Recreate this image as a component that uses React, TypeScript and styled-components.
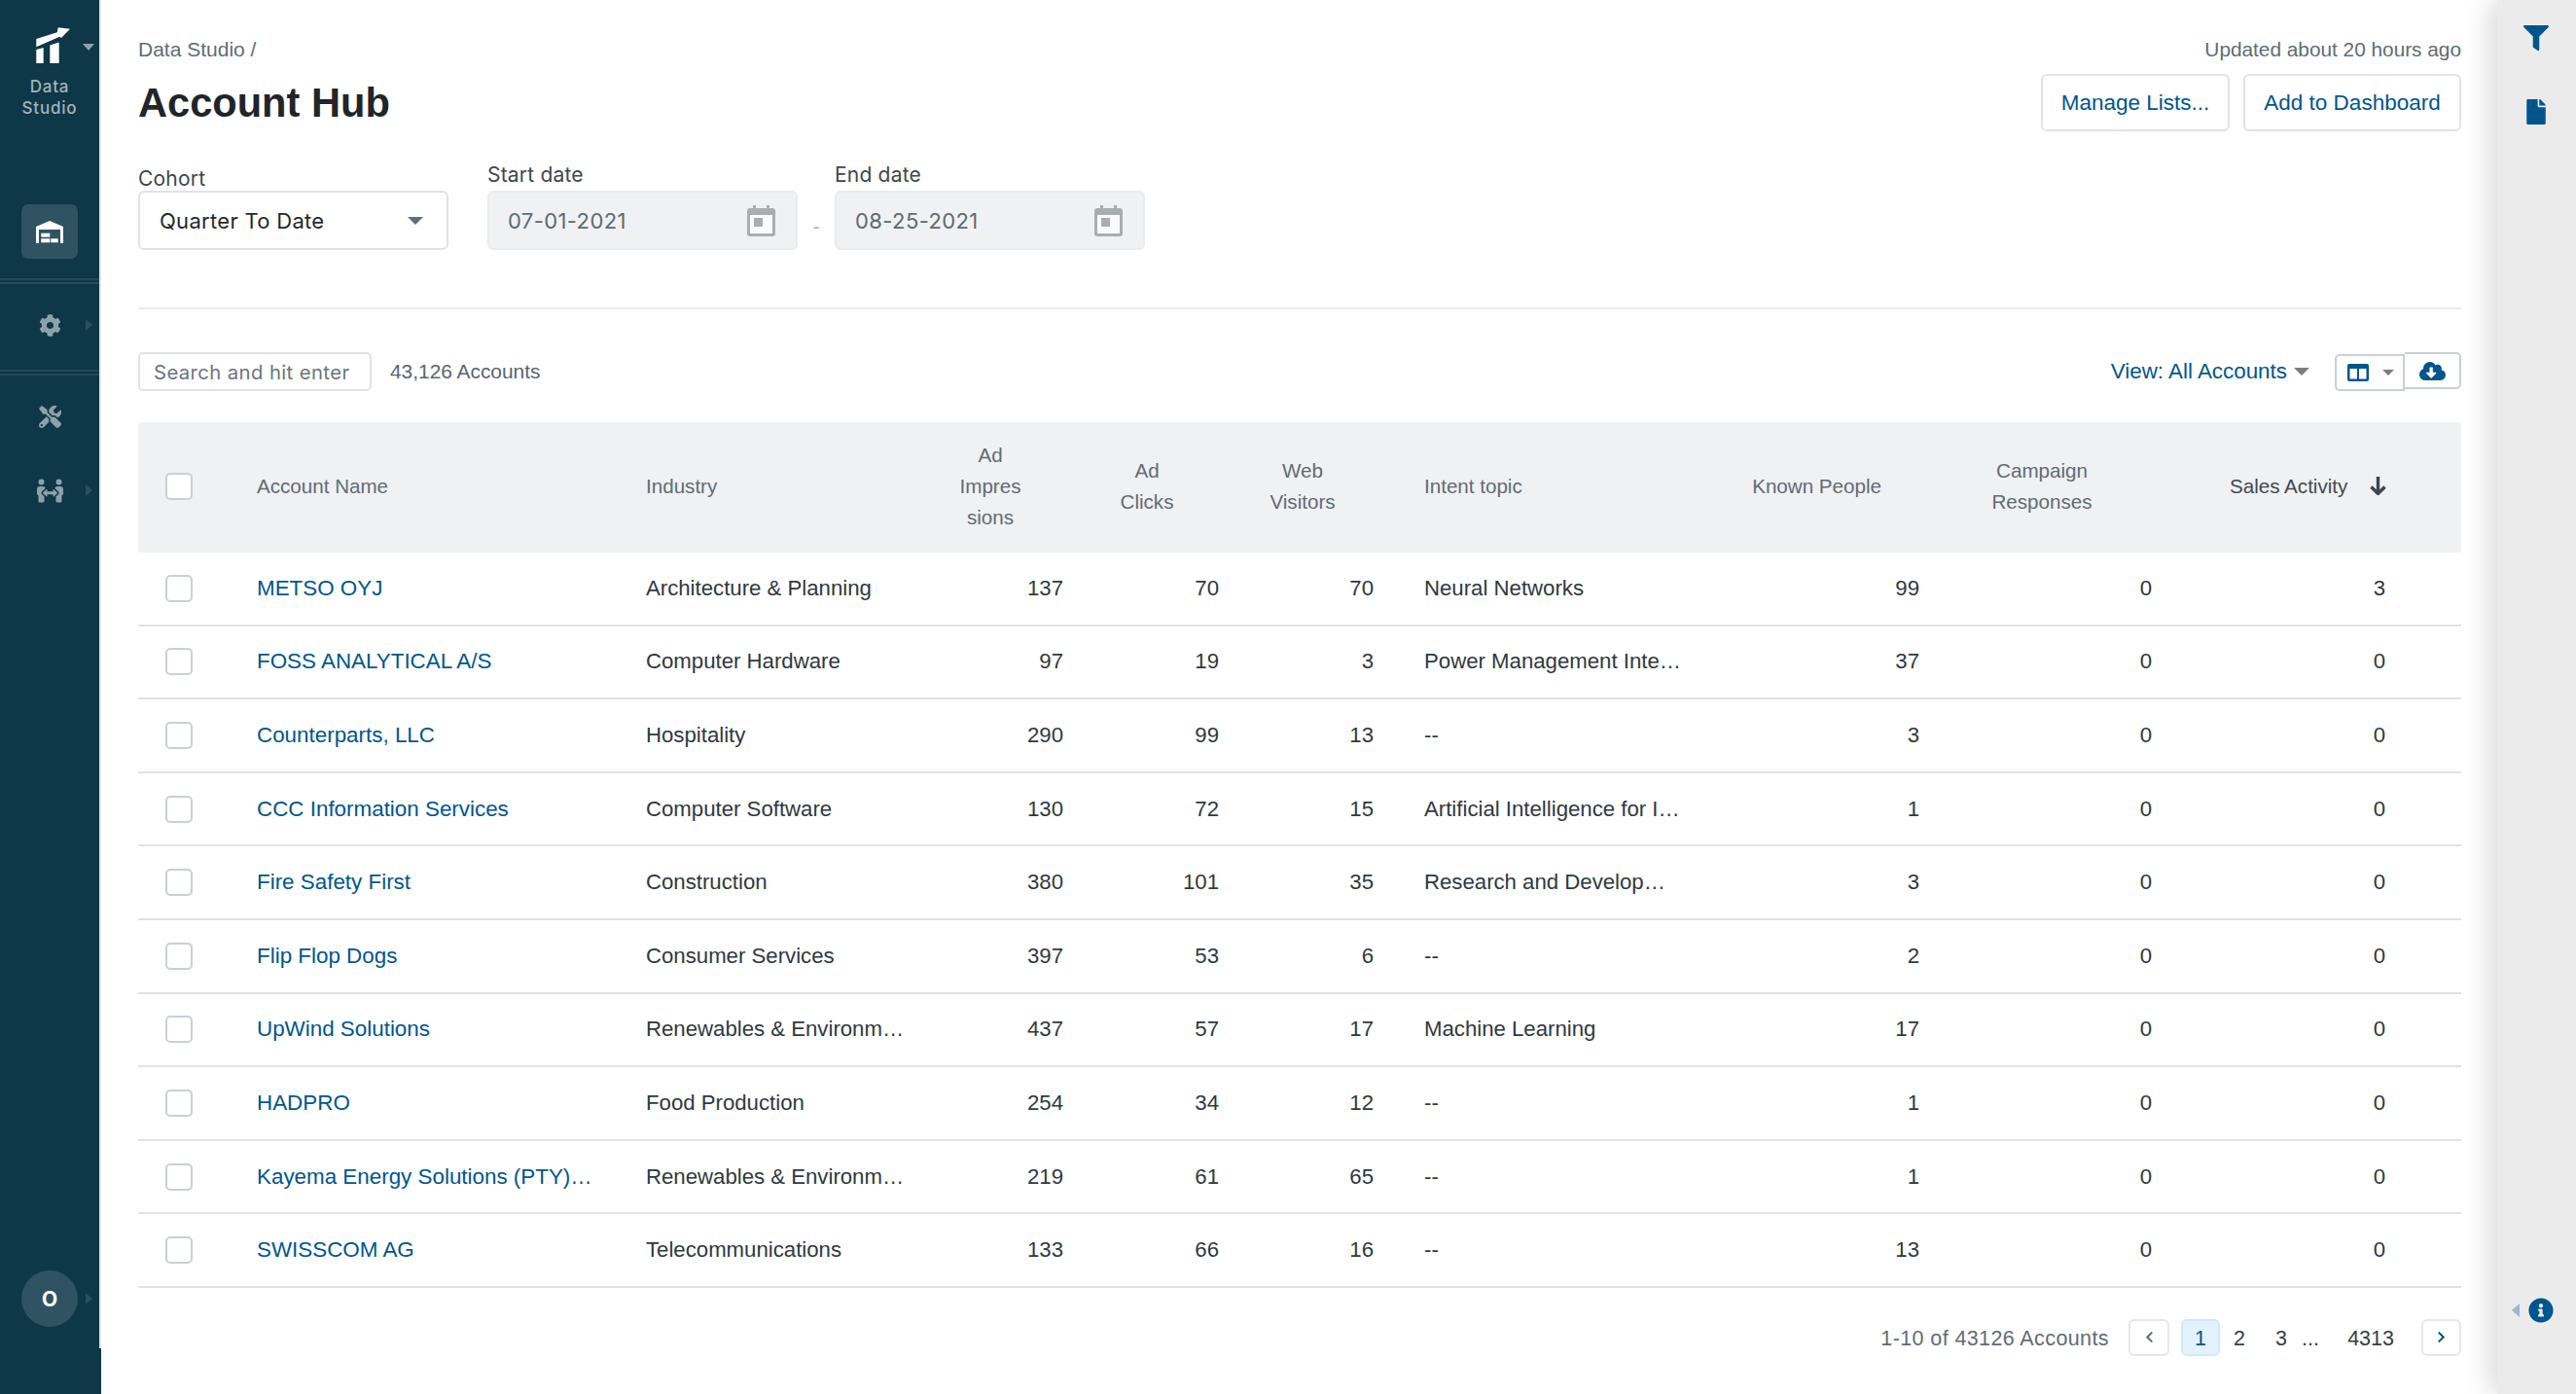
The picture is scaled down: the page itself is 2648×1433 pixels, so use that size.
import React from "react";
import styled, { createGlobalStyle } from "styled-components";
import {
  FaCog,
  FaTools,
  FaPeopleArrows,
  FaFilter,
  FaFile,
  FaCloudDownloadAlt,
  FaInfoCircle,
  FaChevronLeft,
  FaChevronRight,
} from "react-icons/fa";

const NAVY = "#0e3747";
const LINK = "#00568c";
const LINE = "#dfe3e7";
const SANS = '"Liberation Sans", Arial, sans-serif';
const UI = 'Inter, "Noto Sans", sans-serif';

const rows = [
  ["METSO OYJ", "Architecture & Planning", 137, 70, 70, "Neural Networks", 99, 0, 3],
  ["FOSS ANALYTICAL A/S", "Computer Hardware", 97, 19, 3, "Power Management Inte…", 37, 0, 0],
  ["Counterparts, LLC", "Hospitality", 290, 99, 13, "--", 3, 0, 0],
  ["CCC Information Services", "Computer Software", 130, 72, 15, "Artificial Intelligence for I…", 1, 0, 0],
  ["Fire Safety First", "Construction", 380, 101, 35, "Research and Develop…", 3, 0, 0],
  ["Flip Flop Dogs", "Consumer Services", 397, 53, 6, "--", 2, 0, 0],
  ["UpWind Solutions", "Renewables & Environm…", 437, 57, 17, "Machine Learning", 17, 0, 0],
  ["HADPRO", "Food Production", 254, 34, 12, "--", 1, 0, 0],
  ["Kayema Energy Solutions (PTY)…", "Renewables & Environm…", 219, 61, 65, "--", 1, 0, 0],
  ["SWISSCOM AG", "Telecommunications", 133, 66, 16, "--", 13, 0, 0],
];

const GlobalStyle = createGlobalStyle`
  html, body {
    margin: 0;
    height: 100%;
    background: #fff;
    font-family: ${SANS};
    overflow: hidden;
  }
  * {
    box-sizing: border-box;
  }
`;

const Page = styled.div`
  display: flex;
  height: 1433px;
`;

const Sidebar = styled.aside`
  width: 104px;
  flex: none;
  display: flex;
  flex-direction: column;
  background: ${NAVY};
`;

const SidebarBody = styled.div`
  flex: 1;
  display: flex;
  flex-direction: column;
  border-right: 2px solid #e4e4e2;
  padding: 28px 0 22px;
`;

const SidebarFoot = styled.div`
  height: 47px;
`;

const LogoBlock = styled.div`
  position: relative;
  height: 182px;
  display: flex;
  flex-direction: column;
  align-items: center;
`;

const LogoMark = styled.svg`
  width: 38px;
  height: 38px;
  margin-left: 8px;
`;

const LogoText = styled.div`
  margin-top: 12px;
  font-family: ${UI};
  font-size: 17px;
  font-weight: 500;
  line-height: 22px;
  letter-spacing: 0.8px;
  text-align: center;
  color: #a3b3bb;
`;

const DownCaret = styled.span<{ $w: number; $h: number; $color: string }>`
  display: inline-block;
  flex: none;
  width: 0;
  height: 0;
  border-left: ${(p) => p.$w / 2}px solid transparent;
  border-right: ${(p) => p.$w / 2}px solid transparent;
  border-top: ${(p) => p.$h}px solid ${(p) => p.$color};
`;

const LogoCaret = styled.span`
  position: absolute;
  left: 85px;
  top: 17px;
  line-height: 0;
`;

const NavSlot = styled.div<{ $active?: boolean; $gap?: number }>`
  position: relative;
  width: 58px;
  height: 56px;
  margin: ${(p) => p.$gap ?? 0}px 0 0 22px;
  flex: none;
  display: flex;
  align-items: center;
  justify-content: center;
  border-radius: 7px;
  background: ${(p) => (p.$active ? "#2f5361" : "transparent")};
  color: #8ea1ab;
`;

const NavCaret = styled.span`
  position: absolute;
  left: 66px;
  top: 50%;
  margin-top: -6px;
  width: 0;
  height: 0;
  border-top: 6px solid transparent;
  border-bottom: 6px solid transparent;
  border-left: 7px solid #2c4f5e;
`;

const NavRule = styled.div<{ $gap: number }>`
  flex: none;
  height: 6px;
  margin: ${(p) => p.$gap}px 0 14px;
  border-top: 2px solid #264a59;
  border-bottom: 2px solid #264a59;
`;

const Avatar = styled.div`
  position: relative;
  margin: auto 0 0 22px;
  width: 58px;
  height: 58px;
  display: flex;
  align-items: center;
  justify-content: center;
  border-radius: 50%;
  background: #2f5361;
  color: #fff;
  font-family: ${UI};
  font-size: 21px;
  font-weight: 700;
`;

const Main = styled.main`
  flex: 1;
  min-width: 0;
  padding: 38px 37px 0 38px;
`;

const Header = styled.header`
  display: flex;
  justify-content: space-between;
`;

const HeaderLeft = styled.div`
  display: flex;
  flex-direction: column;
`;

const Crumb = styled.div`
  font-size: 21px;
  line-height: 26px;
  color: #5f6c74;
`;

const Title = styled.h1`
  margin: 18px 0 0;
  font-size: 41.6px;
  line-height: 48px;
  font-weight: 700;
  color: #1f2529;
`;

const HeaderRight = styled.div`
  display: flex;
  flex-direction: column;
  align-items: flex-end;
`;

const Updated = styled.div`
  font-size: 20.8px;
  line-height: 26px;
  color: #5f6c74;
`;

const HeaderButtons = styled.div`
  display: flex;
  gap: 14px;
  margin-top: 12px;
`;

const OutlineButton = styled.button<{ $w: number }>`
  width: ${(p) => p.$w}px;
  height: 59px;
  padding: 1px 0 0;
  background: #fff;
  border: 2px solid ${LINE};
  border-radius: 6px;
  font-family: ${SANS};
  font-size: 22.5px;
  color: ${LINK};
`;

const Filters = styled.div`
  display: flex;
  align-items: flex-end;
  margin-top: 33px;
`;

const Field = styled.div<{ $mr?: number }>`
  display: flex;
  flex-direction: column;
  margin-right: ${(p) => p.$mr ?? 0}px;
`;

const FieldLabel = styled.label<{ $low?: boolean }>`
  font-family: ${UI};
  font-size: 21px;
  line-height: 24px;
  letter-spacing: 0.2px;
  color: #3d474e;
  margin-bottom: ${(p) => (p.$low ? 0 : 4)}px;
`;

const SelectBox = styled.div`
  width: 319px;
  height: 61px;
  display: flex;
  align-items: center;
  justify-content: space-between;
  padding: 1px 24px 0 20px;
  background: #fff;
  border: 2px solid ${LINE};
  border-radius: 6px;
  font-family: ${UI};
  font-size: 22px;
  letter-spacing: 0.3px;
  color: #23292d;
`;

const DateBox = styled.div`
  width: 319px;
  height: 61px;
  display: flex;
  align-items: center;
  justify-content: space-between;
  padding: 1px 21px 0 19px;
  background: #f0f1f3;
  border: 2px solid #e9ebee;
  border-radius: 6px;
  font-family: ${UI};
  font-size: 22px;
  letter-spacing: 0.4px;
  color: #5d6a72;
`;

const DateDash = styled.span`
  width: 38px;
  height: 61px;
  display: flex;
  align-items: flex-end;
  justify-content: center;
  padding-bottom: 12px;
  font-size: 20px;
  color: #a5adb3;
`;

const Rule = styled.hr`
  margin: 59px 0 0;
  height: 2px;
  border: 0;
  background: #e8ebee;
`;

const Toolbar = styled.div`
  display: flex;
  align-items: center;
  height: 40px;
  margin-top: 44px;
`;

const SearchInput = styled.div`
  width: 240px;
  height: 40px;
  display: flex;
  align-items: center;
  padding-left: 14px;
  border: 2px solid ${LINE};
  border-radius: 5px;
  font-family: ${UI};
  font-size: 20.3px;
  letter-spacing: 0.4px;
  color: #6a757d;
`;

const Count = styled.span`
  margin-left: 19px;
  font-size: 20.9px;
  color: #59656d;
`;

const ViewPicker = styled.div`
  margin-left: auto;
  display: flex;
  align-items: center;
  gap: 7px;
  font-size: 22.4px;
  color: ${LINK};
`;

const ColumnsButton = styled.button`
  margin-left: 26px;
  align-self: flex-end;
  width: 72px;
  height: 38px;
  display: flex;
  align-items: center;
  gap: 14px;
  padding: 0 0 0 11px;
  background: #fff;
  border: 2px solid #c9d0d6;
  border-radius: 5px 0 0 5px;
`;

const DownloadButton = styled.button`
  align-self: flex-start;
  width: 58px;
  height: 38px;
  display: flex;
  align-items: center;
  justify-content: center;
  padding: 0;
  background: #fff;
  border: 2px solid #c9d0d6;
  border-left: 0;
  border-radius: 0 5px 5px 0;
  color: ${LINK};
  font-size: 27px;
`;

const GRID = "122px 400px 284px 163px 160px 159px 352px 209px 239px 300px";

const HeadRow = styled.div`
  display: grid;
  grid-template-columns: ${GRID};
  height: 134px;
  margin-top: 32px;
  padding-bottom: 3px;
  background: #f0f1f3;
  border-radius: 4px 4px 0 0;
  font-size: 20.6px;
  line-height: 32px;
  color: #5f6c74;
`;

const BodyRow = styled.div`
  display: grid;
  grid-template-columns: ${GRID};
  height: 75.6px;
  border-bottom: 2px solid ${LINE};
  font-size: 22.2px;
  color: #2f3940;
`;

const Cell = styled.div<{ $align?: string; $pl?: number; $pr?: number; $dark?: boolean }>`
  display: flex;
  align-items: center;
  justify-content: ${(p) => (p.$align === "right" ? "flex-end" : p.$align === "center" ? "center" : "flex-start")};
  text-align: ${(p) => p.$align ?? "left"};
  padding-left: ${(p) => p.$pl ?? 0}px;
  padding-right: ${(p) => p.$pr ?? 0}px;
  white-space: nowrap;
  color: ${(p) => (p.$dark ? "#3f4a52" : "inherit")};
`;

const NameLink = styled.a`
  color: ${LINK};
  text-decoration: none;
  font-size: 22.4px;
`;

const Check = styled.span`
  display: block;
  width: 28px;
  height: 28px;
  background: #fff;
  border: 2px solid #c9d0d6;
  border-radius: 5px;
`;

const SortArrow = styled.svg`
  margin-left: 23px;
  width: 17px;
  height: 19px;
`;

const Pager = styled.nav`
  display: flex;
  align-items: center;
  justify-content: flex-end;
  height: 38px;
  margin-top: 32px;
  font-size: 21.5px;
  color: #353f46;
`;

const PagerSummary = styled.span`
  margin-right: 20px;
  padding-top: 3px;
  color: #5f6c74;
  letter-spacing: 0.4px;
`;

const PagerArrow = styled.button<{ $side: "prev" | "next" }>`
  width: ${(p) => (p.$side === "prev" ? 42 : 41)}px;
  height: 38px;
  margin: ${(p) => (p.$side === "prev" ? "0 12px 0 0" : "0 0 0 28px")};
  display: flex;
  align-items: center;
  justify-content: center;
  padding: 0;
  background: #fff;
  border: 2px solid #e5e8eb;
  border-radius: 6px;
  font-size: 13px;
  color: ${(p) => (p.$side === "prev" ? "#5f6c74" : LINK)};
`;

const PageNum = styled.span<{ $w?: number; $current?: boolean; $right?: boolean }>`
  width: ${(p) => p.$w ?? 40}px;
  height: 38px;
  padding-top: 3px;
  display: flex;
  align-items: center;
  justify-content: ${(p) => (p.$right ? "flex-end" : "center")};
  border-radius: 6px;
  background: ${(p) => (p.$current ? "#e3f2fd" : "transparent")};
  border: ${(p) => (p.$current ? "2px solid #cfe8fb" : "0")};
  color: ${(p) => (p.$current ? "#00568c" : "inherit")};
`;

const RightPanel = styled.aside`
  width: 81px;
  flex: none;
  display: flex;
  flex-direction: column;
  align-items: center;
  padding: 26px 1px 73px 0;
  background: #ebebeb;
  box-shadow: -6px 0 28px rgba(0, 0, 0, 0.16);
  color: ${LINK};
  z-index: 1;
`;

const PanelFilter = styled(FaFilter)`
  width: 26px;
  height: 26px;
`;

const PanelFile = styled(FaFile)`
  width: 20px;
  height: 26px;
  margin-top: 50px;
`;

const InfoRow = styled.div`
  margin-top: auto;
  display: flex;
  align-items: center;
  gap: 9px;
  margin-right: 8px;
  font-size: 26px;
  line-height: 0;
`;

const LeftCaret = styled.span`
  width: 0;
  height: 0;
  border-top: 7px solid transparent;
  border-bottom: 7px solid transparent;
  border-right: 8px solid #9db8cc;
`;

const CalendarIcon = () => (
  <svg width="29" height="32" viewBox="0 0 29 32">
    <rect x="6" y="0" width="3" height="6" fill="#a9adb0" />
    <rect x="20" y="0" width="3" height="6" fill="#a9adb0" />
    <rect x="0" y="3" width="29" height="29" rx="3" fill="#a9adb0" />
    <rect x="3" y="10" width="23" height="19" fill="#fbfbfb" />
    <rect x="7" y="13" width="9" height="9" fill="#a9adb0" />
  </svg>
);

const ColumnsIcon = () => (
  <svg width="22" height="18" viewBox="0 0 22 18">
    <rect x="0" y="0" width="22" height="18" rx="2" fill={LINK} />
    <rect x="2.5" y="5" width="7.5" height="10.5" fill="#fff" />
    <rect x="12" y="5" width="7.5" height="10.5" fill="#fff" />
  </svg>
);

const WarehouseIcon = () => (
  <svg width="28" height="23" viewBox="0 0 28 23" fill="#fff">
    <path d="M0 6 14 0l14 6v17h-3V9H3v14H0Z" />
    <rect x="5.3" y="12.7" width="9" height="4" />
    <rect x="5.3" y="18.3" width="9" height="4" />
    <rect x="15.3" y="18.3" width="7.4" height="4" />
  </svg>
);

export default function App() {
  return (
    <>
      <GlobalStyle />
      <Page>
        <Sidebar>
          <SidebarBody>
            <LogoBlock>
              <LogoMark viewBox="0 0 38 38" fill="#fff">
                <path d="M1.3 12 22.7 5.3 23.7.3 36 1.7 27 11l-1.7-1.3L1.3 20.3Z" />
                <path d="M1.3 23l7.4-2v16H1.3Z" />
                <path d="M15.3 18.5l9.4-3V37h-9.4Z" />
              </LogoMark>
              <LogoText>
                Data
                <br />
                Studio
              </LogoText>
              <LogoCaret>
                <DownCaret $w={12} $h={7} $color="#8ea1ab" />
              </LogoCaret>
            </LogoBlock>
            <NavSlot $active>
              <WarehouseIcon />
            </NavSlot>
            <NavRule $gap={20} />
            <NavSlot>
              <FaCog size={23} />
              <NavCaret />
            </NavSlot>
            <NavRule $gap={18} />
            <NavSlot>
              <FaTools size={23} />
            </NavSlot>
            <NavSlot $gap={20}>
              <FaPeopleArrows size={27} />
              <NavCaret />
            </NavSlot>
            <Avatar>
              O
              <NavCaret />
            </Avatar>
          </SidebarBody>
          <SidebarFoot />
        </Sidebar>

        <Main>
          <Header>
            <HeaderLeft>
              <Crumb>Data Studio /</Crumb>
              <Title>Account Hub</Title>
            </HeaderLeft>
            <HeaderRight>
              <Updated>Updated about 20 hours ago</Updated>
              <HeaderButtons>
                <OutlineButton $w={194}>Manage Lists...</OutlineButton>
                <OutlineButton $w={224}>Add to Dashboard</OutlineButton>
              </HeaderButtons>
            </HeaderRight>
          </Header>

          <Filters>
            <Field $mr={40}>
              <FieldLabel $low>Cohort</FieldLabel>
              <SelectBox>
                Quarter To Date
                <DownCaret $w={16} $h={8} $color="#5f6f78" />
              </SelectBox>
            </Field>
            <Field>
              <FieldLabel>Start date</FieldLabel>
              <DateBox>
                07-01-2021
                <CalendarIcon />
              </DateBox>
            </Field>
            <DateDash>-</DateDash>
            <Field>
              <FieldLabel>End date</FieldLabel>
              <DateBox>
                08-25-2021
                <CalendarIcon />
              </DateBox>
            </Field>
          </Filters>

          <Rule />

          <Toolbar>
            <SearchInput>Search and hit enter</SearchInput>
            <Count>43,126 Accounts</Count>
            <ViewPicker>
              View: All Accounts
              <DownCaret $w={16} $h={8} $color="#7d7d7d" />
            </ViewPicker>
            <ColumnsButton>
              <ColumnsIcon />
              <DownCaret $w={12} $h={6} $color="#7d7d7d" />
            </ColumnsButton>
            <DownloadButton>
              <FaCloudDownloadAlt />
            </DownloadButton>
          </Toolbar>

          <HeadRow>
            <Cell $pl={28}>
              <Check />
            </Cell>
            <Cell>Account Name</Cell>
            <Cell>Industry</Cell>
            <Cell $align="center" $pr={23}>
              <div>
                Ad
                <br />
                Impres
                <br />
                sions
              </div>
            </Cell>
            <Cell $align="center" $pr={24}>
              <div>
                Ad
                <br />
                Clicks
              </div>
            </Cell>
            <Cell $align="center" $pr={23}>
              <div>
                Web
                <br />
                Visitors
              </div>
            </Cell>
            <Cell $pl={34}>Intent topic</Cell>
            <Cell $align="right" $pr={57}>
              Known People
            </Cell>
            <Cell $align="center" $pr={23}>
              <div>
                Campaign
                <br />
                Responses
              </div>
            </Cell>
            <Cell $pl={62} $dark>
              Sales Activity
              <SortArrow viewBox="0 0 17 19" fill="none" stroke="#3c464e" strokeWidth="3.4">
                <path d="M8.5 0v17M1.5 10.5l7 7 7-7" />
              </SortArrow>
            </Cell>
          </HeadRow>

          {rows.map((r) => (
            <BodyRow key={r[0]}>
              <Cell $pl={28}>
                <Check />
              </Cell>
              <Cell>
                <NameLink>{r[0]}</NameLink>
              </Cell>
              <Cell>{r[1]}</Cell>
              <Cell $align="right" $pr={18}>
                {r[2]}
              </Cell>
              <Cell $align="right" $pr={18}>
                {r[3]}
              </Cell>
              <Cell $align="right" $pr={18}>
                {r[4]}
              </Cell>
              <Cell $pl={34}>{r[5]}</Cell>
              <Cell $align="right" $pr={18}>
                {r[6]}
              </Cell>
              <Cell $align="right" $pr={18}>
                {r[7]}
              </Cell>
              <Cell $align="right" $pr={78}>
                {r[8]}
              </Cell>
            </BodyRow>
          ))}

          <Pager>
            <PagerSummary>1-10 of 43126 Accounts</PagerSummary>
            <PagerArrow $side="prev">
              <FaChevronLeft />
            </PagerArrow>
            <PageNum $current>1</PageNum>
            <PageNum>2</PageNum>
            <PageNum $w={46}>3</PageNum>
            <PageNum $w={14}>...</PageNum>
            <PageNum $w={79} $right>
              4313
            </PageNum>
            <PagerArrow $side="next">
              <FaChevronRight />
            </PagerArrow>
          </Pager>
        </Main>

        <RightPanel>
          <PanelFilter />
          <PanelFile />
          <InfoRow>
            <LeftCaret />
            <FaInfoCircle />
          </InfoRow>
        </RightPanel>
      </Page>
    </>
  );
}
